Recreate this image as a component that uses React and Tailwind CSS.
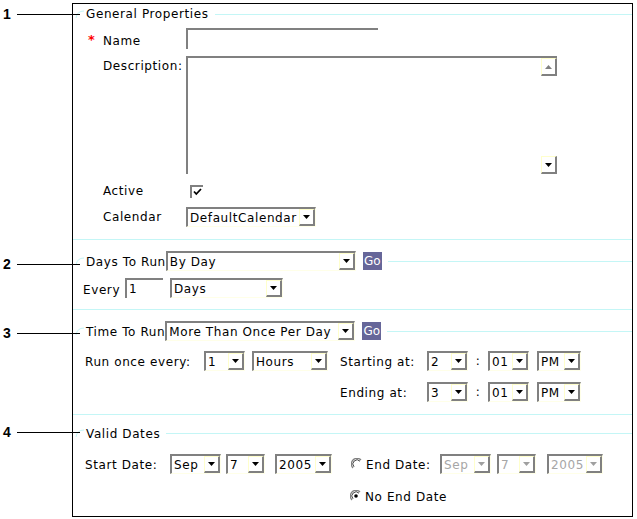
import React from "react";

const CYAN = "bg-[#c4f6f6]";

function Arrow({ disabled, up }) {
  return (
    <span className="flex h-full w-[16px] shrink-0 items-center justify-center border-l border-t border-[#ffffcc] border-r-2 border-b-2 border-r-[#808080] border-b-[#808080] bg-white">
      <svg width="7" height="4" viewBox="0 0 7 4">
        <path
          d={up ? "M3.5 0L7 4H0z" : "M0 0h7L3.5 4z"}
          fill={disabled ? "#a0a0a0" : up ? "#808080" : "#000"}
        />
      </svg>
    </span>
  );
}

function Select({ value, w, disabled }) {
  return (
    <div
      className={`flex h-[20px] shrink-0 border-l-2 border-t-2 border-[#808080] border-r border-b border-r-[#ffffe8] border-b-[#ffffe8] bg-white ${w}`}
    >
      <span
        className={`flex-1 overflow-hidden whitespace-nowrap pl-[2px] pt-[1px] leading-[16px] ${disabled ? "text-[#a6a6a6]" : "text-black"}`}
      >
        {value}
      </span>
      <Arrow disabled={disabled} />
    </div>
  );
}

function Go() {
  return (
    <span className="ml-[7px] flex h-[18px] w-[19px] shrink-0 items-center justify-center bg-[#666699] tracking-normal text-white">
      Go
    </span>
  );
}

function Radio({ checked }) {
  return (
    <svg width="12" height="12" viewBox="0 0 12 12" className="shrink-0">
      <circle cx="6" cy="6" r="5.5" fill="#fff" />
      <path d="M10 2A5.5 5.5 0 0 0 2 10" fill="none" stroke="#808080" strokeWidth="1.3" />
      <path d="M9 3.2A4 4 0 0 0 3 8.8" fill="none" stroke="#404040" strokeWidth="1" />
      {checked && <circle cx="6" cy="6" r="1.8" fill="#000" />}
    </svg>
  );
}

function Legend({ children }) {
  return (
    <div className="flex h-[20px] items-center">
      <svg width="10" height="8" viewBox="0 0 10 8" className="ml-[2px] shrink-0">
        <path d="M1 8 Q2 1 9 1" fill="none" stroke="#c4f6f6" strokeWidth="1" />
      </svg>
      {children}
      <div className={`ml-[6px] h-px flex-1 ${CYAN}`} />
    </div>
  );
}

function Callout({ n, top }) {
  return (
    <div className="absolute left-0 flex items-center" style={{ top }}>
      <span className="w-[15px] pl-[3px] font-['Liberation_Sans'] text-[14px] font-bold leading-none tracking-normal text-black">
        {n}
      </span>
      <span className="ml-[2px] h-px w-[63px] bg-black" />
    </div>
  );
}

export default function App() {
  return (
    <div className="relative h-[519px] w-[637px] bg-white font-['DejaVu_Sans',sans-serif] text-[12px] tracking-[0.6px] text-black">
      <div className="ml-[72px] mt-[3px] w-[561px] border border-black">
        {/* General Properties */}
        <div className="border-b border-[#c4f6f6] pb-[12px]">
          <Legend>
            <span className="ml-[1px]">General Properties</span>
          </Legend>
          <div className="mt-[4px] flex h-[22px] items-start pl-[15px]">
            <span className="w-[15px] pt-[5px] text-[13px] font-bold leading-none text-[#ff0000]">*</span>
            <span className="w-[83px] pt-[4px]">Name</span>
            <div className="h-[21px] w-[192px] border-l-2 border-t-2 border-[#808080]" />
          </div>
          <div className="mt-[6px] flex pl-[30px]">
            <span className="w-[83px] pt-[1px]">Description:</span>
            <div className="flex h-[118px] w-[371px] justify-end border-l-2 border-t-2 border-[#808080]">
              <div className="flex w-[16px] flex-col justify-between">
                <div className="h-[18px]">
                  <Arrow up />
                </div>
                <div className="h-[18px]">
                  <Arrow />
                </div>
              </div>
            </div>
          </div>
          <div className="mt-[10px] flex h-[14px] items-center pl-[30px]">
            <span className="w-[87px]">Active</span>
            <div className="flex h-[13px] w-[13px] items-center justify-center border-l-2 border-t-2 border-[#808080] bg-white">
              <svg width="9" height="8" viewBox="0 0 9 8">
                <path d="M1 3.5l2.3 2.5L8 1" fill="none" stroke="#000" strokeWidth="1.8" />
              </svg>
            </div>
          </div>
          <div className="mt-[9px] flex h-[20px] items-center pl-[30px]">
            <span className="w-[83px]">Calendar</span>
            <Select value="DefaultCalendar" w="w-[130px]" />
          </div>
        </div>

        {/* Days To Run */}
        <div className="border-b border-[#c4f6f6] pb-[11px] pt-[11px]">
          <Legend>
            <span className="ml-[1px] pt-[2px]">Days To Run</span>
            <Select value="By Day" w="w-[190px]" />
            <Go />
          </Legend>
          <div className="mt-[7px] flex h-[20px] items-center pl-[10px]">
            <span className="w-[42px] pt-[3px]">Every</span>
            <div className="h-[20px] w-[38px] border-l-2 border-t-2 border-[#808080] pl-[2px] pt-[1px] leading-[16px]">1</div>
            <div className="ml-[7px]">
              <Select value="Days" w="w-[113px]" />
            </div>
          </div>
        </div>

        {/* Time To Run */}
        <div className="border-b border-[#c4f6f6] pb-[12px] pt-[11px]">
          <Legend>
            <span className="ml-[1px] pt-[2px]">Time To Run</span>
            <Select value="More Than Once Per Day" w="w-[190px]" />
            <Go />
          </Legend>
          <div className="mt-[10px] flex h-[20px] items-center pl-[12px]">
            <span className="w-[119px] pt-[1px]">Run once every:</span>
            <Select value="1" w="w-[41px]" />
            <div className="ml-[7px]">
              <Select value="Hours" w="w-[76px]" />
            </div>
            <span className="ml-[12px] w-[87px] pt-[1px]">Starting at:</span>
            <Select value="2" w="w-[41px]" />
            <span className="w-[20px] text-center">:</span>
            <Select value="01" w="w-[41px]" />
            <div className="ml-[8px]">
              <Select value="PM" w="w-[44px]" />
            </div>
          </div>
          <div className="mt-[11px] flex h-[20px] items-center pl-[267px]">
            <span className="w-[87px] pt-[1px]">Ending at:</span>
            <Select value="3" w="w-[41px]" />
            <span className="w-[20px] text-center">:</span>
            <Select value="01" w="w-[41px]" />
            <div className="ml-[8px]">
              <Select value="PM" w="w-[44px]" />
            </div>
          </div>
        </div>

        {/* Valid Dates */}
        <div className="pb-[10px] pt-[8px]">
          <Legend>
            <span className="ml-[1px] pt-[1px]">Valid Dates</span>
          </Legend>
          <div className="mt-[11px] flex h-[20px] items-center pl-[12px]">
            <span className="w-[85px] pt-[1px]">Start Date:</span>
            <Select value="Sep" w="w-[51px]" />
            <div className="ml-[5px]">
              <Select value="7" w="w-[39px]" />
            </div>
            <div className="ml-[10px]">
              <Select value="2005" w="w-[57px]" />
            </div>
            <div className="ml-[19px] flex items-center">
              <Radio />
              <span className="ml-[3px] w-[74px] pt-[1px]">End Date:</span>
            </div>
            <Select value="Sep" w="w-[51px]" disabled />
            <div className="ml-[6px]">
              <Select value="7" w="w-[39px]" disabled />
            </div>
            <div className="ml-[11px]">
              <Select value="2005" w="w-[56px]" disabled />
            </div>
          </div>
          <div className="mt-[12px] flex h-[20px] items-center pl-[277px]">
            <Radio checked />
            <span className="ml-[3px] pt-[1px]">No End Date</span>
          </div>
        </div>
      </div>

      <Callout n="1" top={4} />
      <Callout n="2" top={254} />
      <Callout n="3" top={323} />
      <Callout n="4" top={422} />
    </div>
  );
}
